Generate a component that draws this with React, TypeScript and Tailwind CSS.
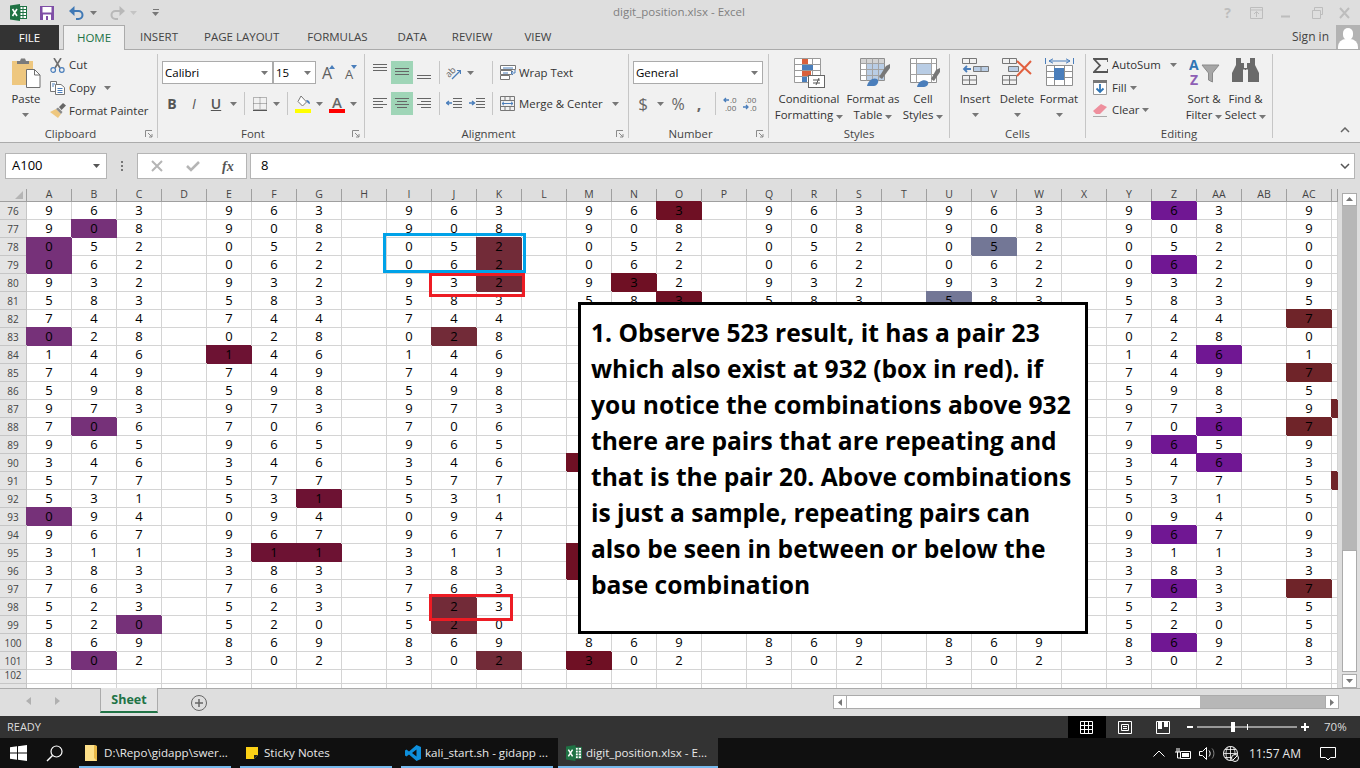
import type { ReactNode } from "react";

// Sheet data
const digits = [
  "963", "908", "052", "062", "932", "583", "744", "028", "146", "749", "598", "973", "706",
  "965", "346", "577", "531", "094", "967", "311", "383", "763", "523", "520", "869", "302",
];
const columns = [
  "A", "B", "C", "D", "E", "F", "G", "H", "I", "J", "K", "L", "M", "N", "O",
  "P", "Q", "R", "S", "T", "U", "V", "W", "X", "Y", "Z", "AA", "AB", "AC", "",
];

const fillClass: Record<string, string> = {
  plum: "bg-[#763179] border-[#763179] shadow-[-1px_-1px_0_0_#763179]",
  wine: "bg-[#6d1233] border-[#6d1233] shadow-[-1px_-1px_0_0_#6d1233]",
  rose: "bg-[#722b38] border-[#722b38] shadow-[-1px_-1px_0_0_#722b38]",
  berry: "bg-[#6f1024] border-[#6f1024] shadow-[-1px_-1px_0_0_#6f1024]",
  slate: "bg-[#737796] border-[#737796] shadow-[-1px_-1px_0_0_#737796]",
  violet: "bg-[#701793] border-[#701793] shadow-[-1px_-1px_0_0_#701793]",
  brick: "bg-[#6f2429] border-[#6f2429] shadow-[-1px_-1px_0_0_#6f2429]",
};

const fills: Record<string, string> = {
  A78: "plum", A79: "plum", A83: "plum", A93: "plum", B77: "plum", B88: "plum", B101: "plum", C99: "plum",
  E84: "wine", F95: "wine", G92: "wine", G95: "wine",
  J83: "rose", J98: "rose", J99: "rose", K78: "rose", K79: "rose", K80: "rose", K101: "rose",
  M90: "berry", M95: "berry", M96: "berry", M101: "berry", N80: "berry", O76: "berry", O81: "berry",
  U81: "slate", V78: "slate",
  Z76: "violet", Z79: "violet", Z89: "violet", Z94: "violet", Z97: "violet", Z100: "violet",
  AA84: "violet", AA88: "violet", AA90: "violet",
  AC82: "brick", AC85: "brick", AC88: "brick", AC97: "brick", AD87: "brick", AD91: "brick",
};

const noteLines = [
  "1. Observe 523 result, it has a pair 23",
  "which also exist at 932 (box in red). if",
  "you notice the combinations above 932",
  "there are pairs that are repeating and",
  "that is the pair 20. Above combinations",
  "is just a sample, repeating pairs can",
  "also be seen in between or below the",
  "base combination",
];

// Small ribbon helpers
const Caret = ({ color = "#777777" }: { color?: string }) => (
  <svg width="7" height="4" viewBox="0 0 7 4" className="inline-block">
    <path d="M0 0h7L3.5 4z" fill={color} />
  </svg>
);

const Launcher = () => (
  <svg width="8" height="8" viewBox="0 0 8 8">
    <path d="M0.5 7V0.5H7M3 3l4 4M7 4v3H4" fill="none" stroke="#8a8a8a" strokeWidth="1" />
  </svg>
);

const VSep = () => <div className="w-px h-[23px] bg-[#c6c6c6]" />;

const Group = ({
  label,
  launcher,
  className,
  children,
}: {
  label: string;
  launcher?: boolean;
  className: string;
  children: ReactNode;
}) => (
  <div className={`flex flex-col h-[84px] border-r border-[#c6c6c6] ${className}`}>
    <div className="h-[72px]">{children}</div>
    <div className="flex h-[12px] leading-[16px] text-[11.4px] text-[#444444]">
      <div className="flex-1 text-center">{label}</div>
      {launcher && (
        <div className="w-[16px] flex justify-center items-start pt-[4px]">
          <Launcher />
        </div>
      )}
    </div>
  </div>
);

const BigButton = ({
  className,
  icon,
  lines,
  caret,
}: {
  className: string;
  icon: ReactNode;
  lines: string[];
  caret?: "inline" | "below";
}) => (
  <div className={`flex flex-col items-center pt-[4px] ${className}`}>
    <div className="h-[30px] flex items-start justify-center">{icon}</div>
    <div className="mt-[3px] text-[11.4px] leading-[16px] text-[#333333] text-center whitespace-nowrap">
      {lines.map((line, i) => (
        <div key={line}>
          {line}
          {caret === "inline" && i === lines.length - 1 && (
            <span className="inline-block ml-[3px] align-middle">
              <Caret />
            </span>
          )}
        </div>
      ))}
      {caret === "below" && (
        <div className="h-[16px] flex items-center justify-center">
          <Caret />
        </div>
      )}
    </div>
  </div>
);

const SmallRow = ({ icon, label, caret, className }: { icon: ReactNode; label: string; caret: ReactNode; className: string }) => (
  <div className={`flex items-center text-[11.4px] text-[#333333] whitespace-nowrap ${className}`}>
    <div className="w-[19px] flex items-center">{icon}</div>
    <span>{label}</span>
    {caret}
  </div>
);

const InputBox = ({ className, text, caretClass }: { className: string; text: string; caretClass: string }) => (
  <div className={`h-[23px] bg-white border border-[#ababab] flex items-center justify-between text-[11.5px] text-black ${className}`}>
    <span className="pl-[2px]">{text}</span>
    <span className={`flex ${caretClass}`}>
      <Caret />
    </span>
  </div>
);

// Icons
const ExcelLogo = ({ size = 17 }: { size?: number }) => (
  <svg width={size} height={size} viewBox="0 0 17 17">
    <rect x="5" y="2.5" width="11.5" height="12" fill="#fff" stroke="#1f7244" />
    <path d="M10 2.5v12M13 2.5v12M7 5.5h9M7 8.5h9M7 11.5h9" stroke="#1f7244" strokeWidth="1" />
    <path d="M0 1.5 10 0v17L0 15.5z" fill="#1f7244" />
    <path d="M2.5 5 7 12M7 5 2.5 12" stroke="#fff" strokeWidth="1.6" />
  </svg>
);

const SaveIcon = () => (
  <svg width="14" height="14" viewBox="0 0 14 14">
    <path d="M0 0h14v14H0z" fill="#7f4fa6" />
    <rect x="2.5" y="1" width="9" height="5.5" fill="#fff" />
    <rect x="3" y="8.5" width="8" height="5.5" fill="#fff" />
    <rect x="6" y="10" width="2" height="4" fill="#7f4fa6" />
  </svg>
);

const TurnArrow = ({ color, flip }: { color: string; flip?: boolean }) => (
  <svg width="15" height="14" viewBox="0 0 15 14" className={flip ? "-scale-x-100" : ""}>
    <path d="M4 5h5.5a4 4 0 0 1 0 8H7" fill="none" stroke={color} strokeWidth="2" />
    <path d="M0 5 5.5 0v10z" fill={color} />
  </svg>
);

const PasteIcon = () => (
  <svg width="30" height="30" viewBox="0 0 30 30">
    <rect x="1" y="3" width="21" height="24" fill="#eec77f" />
    <path d="M6 3h3l1-2.500h4l1 2.500h3v3H6z" fill="#7b7b7b" />
    <path d="M15.500 11.500h8l5.500 5.500v12.500H15.500z" fill="#fff" stroke="#6f6f6f" />
    <path d="M23.500 11.500v5.500H29" fill="none" stroke="#6f6f6f" />
  </svg>
);

const CutIcon = () => (
  <svg width="15" height="15" viewBox="0 0 15 15">
    <path d="M4 0l6 10M11 0 5 10" stroke="#6f6f6f" strokeWidth="1.600" />
    <circle cx="3.200" cy="12" r="2.300" fill="none" stroke="#4a7ebb" strokeWidth="1.200" />
    <circle cx="11.800" cy="12" r="2.300" fill="none" stroke="#4a7ebb" strokeWidth="1.200" />
  </svg>
);

const CopyIcon = () => (
  <svg width="15" height="14" viewBox="0 0 15 14">
    <path d="M.5.500h6v10h-6z" fill="#fff" stroke="#777" />
    <path d="M5.500 3.500h5.500l3.500 3v7h-9z" fill="#fff" stroke="#777" />
    <path d="M7.500 7.500h5M7.500 9.500h5M7.500 11.500h5M2 3h3M2 5h2" stroke="#4a7ebb" />
  </svg>
);

const PainterIcon = () => (
  <svg width="16" height="15" viewBox="0 0 16 15">
    <path d="M0 9l6-3 5 5-3 4z" fill="#eec77f" />
    <path d="M6 6l5 5 1.500-2L8 4.500z" fill="#8a8a8a" />
    <path d="M9 4l4-4 3 2.500-4.500 4.500z" fill="#666" />
  </svg>
);

const GrowA = ({ size, up }: { size: number; up: boolean }) => (
  <span className="relative inline-flex w-[16px] h-[16px] items-end justify-center">
    <span className="text-[#5f5f5f] font-medium leading-none" style={{ fontSize: size }}>
      A
    </span>
    <svg width="6" height="4" viewBox="0 0 6 4" className="absolute right-0 top-0">
      <path d={up ? "M0 4h6L3 0z" : "M0 0h6L3 4z"} fill="#4a7ebb" />
    </svg>
  </span>
);

const BorderIcon = () => (
  <svg width="14" height="14" viewBox="0 0 14 14">
    <path d="M.5.500h13v12h-13zM7 .5v12M.5 6.500h13" fill="none" stroke="#777" strokeDasharray="1 1" />
    <path d="M0 13.500h14" stroke="#555" />
  </svg>
);

const FillIcon = () => (
  <svg width="16" height="18" viewBox="0 0 16 18">
    <path d="M6 1l5.500 6-4 4L3 6.500z" fill="#fff" stroke="#777" />
    <path d="M11 5c3 0 4 2 4 4-1 0-2-1-3-2z" fill="#4a7ebb" />
    <rect x="0" y="14" width="16" height="4" fill="#ffff00" />
  </svg>
);

const ColorAIcon = () => (
  <span className="flex flex-col items-center w-[16px] h-[18px]">
    <span className="text-[15px] leading-[14px] font-semibold text-[#666666]">A</span>
    <span className="w-[16px] h-[4px] bg-[#ff0000]" />
  </span>
);

const AlignV = ({ at }: { at: "top" | "mid" | "bot" }) => {
  const base = at === "top" ? 3 : at === "mid" ? 7 : 11;
  return (
    <svg width="14" height="23" viewBox="0 0 14 23">
      {[0, 3, 6].slice(at === "bot" ? 1 : 0).map((d) => (
        <path key={d} d={`M0 ${base + d + 0.5}h14`} stroke="#666" />
      ))}
    </svg>
  );
};

const AlignH = ({ at }: { at: "left" | "center" | "right" }) => {
  const wide = "M0 ";
  const shorts = at === "left" ? 0 : at === "center" ? 2 : 4;
  return (
    <svg width="14" height="12" viewBox="0 0 14 12">
      {[0.5, 3.5, 6.5, 9.5].map((y, i) => (
        <path key={y} d={i % 2 === 0 ? `${wide}${y}h14` : `M${shorts} ${y}h10`} stroke="#666" />
      ))}
    </svg>
  );
};

const OrientIcon = () => (
  <svg width="15" height="15" viewBox="0 0 15 15">
    <text x="0" y="10" fontSize="9" fontFamily="Open Sans" fill="#666" transform="rotate(-45 5 8)">
      ab
    </text>
    <path d="M6 14 14 6" stroke="#4a7ebb" strokeWidth="1.200" />
    <path d="M11 5.500h3.500V9" fill="none" stroke="#4a7ebb" strokeWidth="1.200" />
  </svg>
);

const IndentIcon = ({ dir }: { dir: "dec" | "inc" }) => (
  <svg width="16" height="12" viewBox="0 0 16 12">
    <path d="M7 .5h9M7 3.500h9M7 6.500h9M7 9.500h9" stroke="#666" />
    <path d={dir === "inc" ? "M0 5h5M3 3l2.500 2L3 7" : "M6 5H1M3 3 .5 5 3 7"} fill="none" stroke="#4a7ebb" strokeWidth="1.400" />
  </svg>
);

const WrapIcon = () => (
  <svg width="16" height="15" viewBox="0 0 16 15">
    <path d="M.5.500h15v4H.5zM.5 5.500h11v4H.5zM.5 10.500h9v4H.5z" fill="#fff" stroke="#777" />
    <path d="M3 3h10M3 8h5" stroke="#4a7ebb" />
    <path d="M15 5v3h-4M13 6l-2 2 2 2" fill="none" stroke="#4a7ebb" />
  </svg>
);

const MergeIcon = () => (
  <svg width="15" height="15" viewBox="0 0 15 15">
    <path d="M.5.500h14v14H.5zM.5 4.500h14M.5 10.500h14M5 .5v4M10 .5v4M5 10.500v4M10 10.500v4" fill="none" stroke="#777" />
    <path d="M2 7.500h11M4 5.800 2 7.500l2 1.700M11 5.800l2 1.700-2 1.700" fill="none" stroke="#4a7ebb" />
  </svg>
);

const DecimalIcon = ({ more }: { more: boolean }) => (
  <svg width="18" height="15" viewBox="0 0 18 15" className="text-[#666666]">
    <text x={more ? 7 : 2} y="6.500" fontSize="8" fontFamily="Open Sans" fill="currentColor">
      {more ? ".0" : ".00"}
    </text>
    <text x={more ? 2 : 7} y="14.500" fontSize="8" fontFamily="Open Sans" fill="currentColor">
      {more ? ".00" : ".0"}
    </text>
    <path d={more ? "M1 4h5M3 2 1 4l2 2" : "M0 11h5M3 9l2 2-2 2"} fill="none" stroke="#4a7ebb" strokeWidth="1.300" />
  </svg>
);

const CondFormatIcon = () => (
  <svg width="31" height="30" viewBox="0 0 31 30">
    <path d="M.5.500h26v24H.5zM8.500.5v24M18.500.5v24M.5 6.500h26M.5 12.500h26M.5 18.500h26" fill="#fff" stroke="#9a9a9a" />
    <rect x="8" y="1" width="6" height="5" fill="#d9603b" />
    <rect x="8" y="7" width="11" height="5" fill="#4a7ebb" />
    <rect x="8" y="13" width="9" height="5" fill="#d9603b" />
    <rect x="8" y="19" width="5" height="5" fill="#4a7ebb" />
    <rect x="14.500" y="17.500" width="16" height="12" fill="#fff" stroke="#666" />
    <path d="M19 22h7M19 25h7M25 20l-3 7" stroke="#555" fill="none" />
  </svg>
);

const TableBrushIcon = () => (
  <svg width="30" height="30" viewBox="0 0 30 30" className="ml-[4px]">
    <path d="M.5.500h24v22H.5z" fill="#fff" stroke="#8f8f8f" />
    <rect x="1" y="1" width="23" height="4.500" fill="#d3d3d3" />
    <rect x="6" y="6" width="18" height="16" fill="#b9cde5" />
    <path d="M6.500.5v22M12.500.5v22M18.500.5v22M.5 5.500h24M.5 11.500h24M.5 17.500h24" stroke="#a3a3a3" />
    <path d="M19 19l7-11 4-2v4l-8 11z" fill="#777" />
    <path d="M7 28c1-5 6-9 10-7 3 2 0 7-3 7z" fill="#4a7ebb" />
  </svg>
);

const CellStyleIcon = () => (
  <svg width="30" height="30" viewBox="0 0 30 30" className="ml-[3px]">
    <path d="M.5.500h26v24H.5z" fill="#fff" stroke="#8f8f8f" />
    <rect x="6" y="6" width="15" height="10" fill="#b9cde5" />
    <path d="M6.500.5v24M21.500.5v24M.5 5.500h26M.5 16.500h26" stroke="#a3a3a3" />
    <path d="M21 21l5-9 4-2v4l-6 9z" fill="#777" />
    <path d="M7 29c1-5 6-8 10-6 3 2 0 6-3 6z" fill="#4a7ebb" />
  </svg>
);

const InsertIcon = () => (
  <svg width="27" height="28" viewBox="0 0 27 28">
    <path d="M.5.500h14v5H.5zM7.500.5v5M.5 17.500h14v9H.5zM7.500 17.500v9M.5 22h14" fill="none" stroke="#777" />
    <path d="M11.500 8.500h15v5h-15z" fill="#b9cde5" stroke="#777" />
    <path d="M19 8.500v5" stroke="#777" />
    <path d="M9 11H2M5 8 2 11l3 3" fill="none" stroke="#4a7ebb" strokeWidth="1.800" />
  </svg>
);

const DeleteIcon = () => (
  <svg width="31" height="28" viewBox="0 0 31 28">
    <path d="M.5.500h14v5H.5zM7.500.5v5M.5 17.500h14v9H.5zM7.500 17.500v9M.5 22h14" fill="none" stroke="#777" />
    <path d="M6.500 8.500h10v5h-10z" fill="#b9cde5" stroke="#777" />
    <path d="M15 3l14 13M29 3 15 18" stroke="#e2603f" strokeWidth="2" />
  </svg>
);

const FormatIcon = () => (
  <svg width="29" height="30" viewBox="0 0 29 30">
    <path d="M4 3h21M8 .8 4 3l4 2.200M21 .8 25 3l-4 2.200M.5 0v6M28.500 0v6" fill="none" stroke="#4a7ebb" />
    <path d="M1.500 7.500h26v20h-26zM9.500 7.500v20M19.500 7.500v20M1.500 13.500h26M1.500 19.500h26" fill="#fff" stroke="#8f8f8f" />
    <rect x="9" y="10" width="10" height="12" fill="#4a7ebb" />
  </svg>
);

const SigmaIcon = () => (
  <svg width="15" height="15" viewBox="0 0 15 15">
    <path d="M15 4V1H1l6 6.500L1 14h14v-3" fill="none" stroke="#555" strokeWidth="1.800" />
  </svg>
);

const FillDownIcon = () => (
  <svg width="14" height="15" viewBox="0 0 14 15">
    <path d="M.5.500h13v14H.5z" fill="#fff" stroke="#999" />
    <rect x="0" y="0" width="14" height="3" fill="#777" />
    <path d="M7 4v8M3.500 8.500 7 12l3.500-3.500" fill="none" stroke="#2f75b5" strokeWidth="1.800" />
  </svg>
);

const EraserIcon = () => (
  <svg width="15" height="14" viewBox="0 0 15 14">
    <path d="M0 8l8-7 6 3-7 7H3z" fill="#ee8f9d" />
    <path d="M0 13.500h14" stroke="#aaa" />
  </svg>
);

const SortIcon = () => (
  <svg width="31" height="28" viewBox="0 0 31 28">
    <text x="0" y="12" fontSize="14" fontWeight="700" fontFamily="Open Sans" fill="#2f75b5">
      A
    </text>
    <text x="1" y="27" fontSize="14" fontWeight="700" fontFamily="Open Sans" fill="#8e5fb5">
      Z
    </text>
    <path d="M13 7h17l-6.500 8v9l-4-2v-7z" fill="#a6a6a6" stroke="#8a8a8a" />
  </svg>
);

const BinocularsIcon = () => (
  <svg width="27" height="24" viewBox="0 0 27 24">
    <path d="M4 0h5v5h3v5h3V5h3V0h5v7l4 8v9H16V12h-5v12H0v-9l4-8z" fill="#6a6a6a" />
    <path d="M12 11v12M15 11v12" stroke="#f1f1f1" />
  </svg>
);

const WinLogo = () => (
  <svg width="17" height="16" viewBox="0 0 17 16">
    <path d="M0 2.300 7 1.300v6.200H0zM8 1.200 17 0v7.500H8zM0 8.500h7v6.200l-7-1zM8 8.500h9V16l-9-1.200z" fill="#fff" />
  </svg>
);

const SearchIcon = () => (
  <svg width="17" height="17" viewBox="0 0 17 17">
    <circle cx="10.500" cy="6.500" r="5.500" fill="none" stroke="#fff" strokeWidth="1.200" />
    <path d="M6.500 10.500 1 16" stroke="#fff" strokeWidth="1.400" />
  </svg>
);

const FolderIcon = () => (
  <svg width="13" height="16" viewBox="0 0 13 16">
    <path d="M0 0h9l3 1v15H0z" fill="#fde08a" />
    <path d="M9 0v13l3 3V1z" fill="#e9b949" />
  </svg>
);

const StickyIcon = () => (
  <svg width="12" height="12" viewBox="0 0 12 12">
    <path d="M0 0h12v8l-4 4H0z" fill="#fcd116" />
    <path d="M12 8H8v4z" fill="#222" />
  </svg>
);

const VsCodeIcon = () => (
  <svg width="16" height="16" viewBox="0 0 16 16">
    <path d="M11.500 0 16 2v12l-4.500 2L4 9.500 1.500 11.500 0 10.500V5.500L1.500 4.500 4 6.500zM11.500 4.500 7 8l4.500 3.500z" fill="#0e8fdc" />
  </svg>
);

const App = () => {
  const tabs = [
    { name: "INSERT", cls: "ml-[15px]" },
    { name: "PAGE LAYOUT", cls: "ml-[26px]" },
    { name: "FORMULAS", cls: "ml-[28px]" },
    { name: "DATA", cls: "ml-[30px]" },
    { name: "REVIEW", cls: "ml-[25px]" },
    { name: "VIEW", cls: "ml-[32px]" },
  ];

  return (
    <div className="w-[1360px] h-[768px] overflow-hidden flex flex-col bg-[#dedede] font-['Open_Sans',sans-serif] text-[12px]">
      {/* Title bar */}
      <div className="h-[25px] flex items-center relative">
        <div className="ml-[10px]">
          <ExcelLogo />
        </div>
        <div className="ml-[13px]">
          <SaveIcon />
        </div>
        <div className="ml-[15px]">
          <TurnArrow color="#3f78b5" />
        </div>
        <div className="ml-[6px] flex">
          <Caret />
        </div>
        <div className="ml-[13px]">
          <TurnArrow color="#b8b8b8" flip />
        </div>
        <div className="ml-[5px] flex">
          <Caret color="#c4c4c4" />
        </div>
        <div className="ml-[15px] flex flex-col gap-[2px] items-center">
          <div className="w-[6px] h-px bg-[#777777]" />
          <Caret />
        </div>
        <div className="flex-1 text-center text-[11.5px] text-[#808080] pr-[14px] pb-[1px]">digit_position.xlsx - Excel</div>
        <div className="flex items-center text-[#bdbdbd]">
          <span className="w-[29px] text-center font-bold text-[14px]">?</span>
          <svg width="29" height="12" viewBox="0 0 29 12">
            <path d="M8.500 .5h12v11h-12zM8.500 3h12M14.500 10V5M12 7l2.500-2.500L17 7" fill="none" stroke="#bdbdbd" />
          </svg>
          <svg width="30" height="12" viewBox="0 0 30 12">
            <path d="M10 9.500h9" stroke="#bdbdbd" strokeWidth="2" />
          </svg>
          <svg width="30" height="12" viewBox="0 0 30 12">
            <path d="M11.500 3.500h8v8h-8zM13.500 3V.5h8v7h-2" fill="none" stroke="#bdbdbd" />
          </svg>
          <svg width="30" height="12" viewBox="0 0 30 12" className="mr-[-1px]">
            <path d="M9 1l9 10M18 1 9 11" stroke="#bdbdbd" strokeWidth="2" />
          </svg>
        </div>
      </div>

      {/* Tabs */}
      <div className="h-[25px] flex items-start border-b border-[#ababab] text-[11.5px] text-[#444444]">
        <div className="w-[59px] h-[25px] bg-[#333333] text-white flex items-center justify-center">FILE</div>
        <div className="ml-[4px] w-[62px] h-[25px] bg-[#f1f1f1] border-x border-t border-[#ababab] text-[#217346] flex items-center justify-center relative">
          HOME
        </div>
        {tabs.map((tab) => (
          <div key={tab.name} className={`h-[24px] flex items-center ${tab.cls}`}>
            {tab.name}
          </div>
        ))}
        <div className="ml-auto h-[24px] flex items-center text-[12px]">
          <span className="mr-[7px]">Sign in</span>
          <div className="w-[24px] h-[24px] bg-[#b3b3b3] overflow-hidden flex flex-col items-center">
            <div className="w-[10px] h-[12px] mt-[3px] rounded-full bg-white" />
            <div className="w-[20px] h-[10px] -mt-[1px] rounded-t-[8px] bg-white" />
          </div>
        </div>
      </div>

      {/* Ribbon */}
      <div className="h-[93px] bg-[#f1f1f1] border-b border-[#ababab] pt-[4px] flex">
        <Group label="Clipboard" launcher className="w-[158px]">
          <div className="flex">
            <div className="w-[50px] pl-[2px]">
              <BigButton className="w-[48px]" icon={<PasteIcon />} lines={["Paste"]} caret="below" />
            </div>
            <div className="flex flex-col">
              <SmallRow className="h-[22px]" icon={<CutIcon />} label="Cut" caret={null} />
              <SmallRow
                className="h-[23px]"
                icon={<CopyIcon />}
                label="Copy"
                caret={
                  <span className="ml-[8px] flex">
                    <Caret />
                  </span>
                }
              />
              <SmallRow className="h-[22px] pt-[1px]" icon={<PainterIcon />} label="Format Painter" caret={null} />
            </div>
          </div>
        </Group>

        <Group label="Font" launcher className="w-[207px]">
          <div className="pt-[7px] pl-[4px]">
            <div className="flex items-center">
              <InputBox className="w-[111px]" text="Calibri" caretClass="pr-[4px]" />
              <InputBox className="w-[43px]" text="15" caretClass="pr-[4px]" />
              <div className="ml-[3px] flex gap-[6px]">
                <GrowA size={16} up />
                <GrowA size={13} up={false} />
              </div>
            </div>
            <div className="mt-[8px] flex items-center h-[23px] text-[14px] text-[#555555]">
              <div className="w-[20px] text-center font-bold">B</div>
              <div className="w-[24px] text-center italic">I</div>
              <div className="w-[20px] text-center font-semibold underline">U</div>
              <div className="w-[14px] flex justify-center">
                <Caret />
              </div>
              <div className="w-[9px] flex justify-center">
                <VSep />
              </div>
              <div className="w-[22px] flex justify-center">
                <BorderIcon />
              </div>
              <div className="w-[10px] flex justify-center">
                <Caret />
              </div>
              <div className="w-[12px] flex justify-center">
                <VSep />
              </div>
              <div className="w-[20px] flex justify-center">
                <FillIcon />
              </div>
              <div className="w-[12px] flex justify-center">
                <Caret />
              </div>
              <div className="w-[24px] flex justify-center">
                <ColorAIcon />
              </div>
              <div className="w-[8px] flex justify-center">
                <Caret />
              </div>
            </div>
          </div>
        </Group>

        <Group label="Alignment" launcher className="w-[264px]">
          <div className="pt-[7px] pl-[4px]">
            <div className="flex items-center h-[23px]">
              <div className="w-[22px] flex justify-center">
                <AlignV at="top" />
              </div>
              <div className="w-[22px] h-[23px] bg-[#9fd5b7] flex justify-center">
                <AlignV at="mid" />
              </div>
              <div className="w-[22px] flex justify-center">
                <AlignV at="bot" />
              </div>
              <div className="w-[8px] flex justify-center">
                <VSep />
              </div>
              <div className="w-[20px] flex justify-center">
                <OrientIcon />
              </div>
              <div className="w-[14px] flex justify-center">
                <Caret />
              </div>
              <div className="w-[11px]" />
              <div className="w-[8px] flex justify-center">
                <VSep />
              </div>
              <div className="pl-[4px] w-[23px]">
                <WrapIcon />
              </div>
              <span className="text-[11.4px] text-[#333333]">Wrap Text</span>
            </div>
            <div className="mt-[8px] flex items-center h-[23px]">
              <div className="w-[22px] flex justify-center">
                <AlignH at="left" />
              </div>
              <div className="w-[22px] h-[23px] bg-[#9fd5b7] flex justify-center items-center">
                <AlignH at="center" />
              </div>
              <div className="w-[22px] flex justify-center">
                <AlignH at="right" />
              </div>
              <div className="w-[8px] flex justify-center">
                <VSep />
              </div>
              <div className="w-[22px] flex justify-center">
                <IndentIcon dir="dec" />
              </div>
              <div className="w-[23px] flex justify-center">
                <IndentIcon dir="inc" />
              </div>
              <div className="w-[8px] flex justify-center">
                <VSep />
              </div>
              <div className="pl-[4px] w-[23px]">
                <MergeIcon />
              </div>
              <span className="text-[11.4px] text-[#333333]">Merge &amp; Center</span>
              <span className="ml-[9px] flex">
                <Caret />
              </span>
            </div>
          </div>
        </Group>

        <Group label="Number" launcher className="w-[140px]">
          <div className="pt-[7px] pl-[4px]">
            <InputBox className="w-[130px]" text="General" caretClass="pr-[4px]" />
            <div className="mt-[8px] -ml-[1px] flex items-center h-[23px] text-[#666666]">
              <div className="w-[22px] text-center text-[17px]">$</div>
              <div className="w-[12px] flex justify-center">
                <Caret />
              </div>
              <div className="w-[24px] text-center text-[16px]">%</div>
              <div className="w-[18px] text-center text-[16px] font-bold leading-none">,</div>
              <div className="w-[14px] flex justify-center">
                <VSep />
              </div>
              <div className="w-[20px] flex justify-center">
                <DecimalIcon more />
              </div>
              <div className="w-[20px] flex justify-center">
                <DecimalIcon more={false} />
              </div>
            </div>
          </div>
        </Group>

        <Group label="Styles" className="w-[181px]">
          <div className="flex pl-[6px]">
            <BigButton className="w-[68px]" icon={<CondFormatIcon />} lines={["Conditional", "Formatting"]} caret="inline" />
            <BigButton className="ml-[4px] w-[52px]" icon={<TableBrushIcon />} lines={["Format as", "Table"]} caret="inline" />
            <BigButton className="ml-[5px] w-[38px]" icon={<CellStyleIcon />} lines={["Cell", "Styles"]} caret="inline" />
          </div>
        </Group>

        <Group label="Cells" className="w-[136px]">
          <div className="flex pl-[10px]">
            <BigButton className="w-[30px]" icon={<InsertIcon />} lines={["Insert"]} caret="below" />
            <BigButton className="ml-[10px] w-[34px]" icon={<DeleteIcon />} lines={["Delete"]} caret="below" />
            <BigButton className="ml-[6px] w-[38px]" icon={<FormatIcon />} lines={["Format"]} caret="below" />
          </div>
        </Group>

        <Group label="Editing" className="w-[187px]">
          <div className="flex pl-[7px]">
            <div className="w-[93px] flex flex-col">
              <SmallRow
                className="h-[22px]"
                icon={<SigmaIcon />}
                label="AutoSum"
                caret={
                  <span className="ml-[9px] flex">
                    <Caret />
                  </span>
                }
              />
              <SmallRow
                className="h-[23px]"
                icon={<FillDownIcon />}
                label="Fill"
                caret={
                  <span className="ml-[3px] flex">
                    <Caret />
                  </span>
                }
              />
              <SmallRow
                className="h-[22px]"
                icon={<EraserIcon />}
                label="Clear"
                caret={
                  <span className="ml-[3px] flex">
                    <Caret />
                  </span>
                }
              />
            </div>
            <BigButton className="w-[36px]" icon={<SortIcon />} lines={["Sort &", "Filter"]} caret="inline" />
            <BigButton className="ml-[4px] w-[39px]" icon={<BinocularsIcon />} lines={["Find &", "Select"]} caret="inline" />
          </div>
        </Group>

        <div className="flex-1 flex justify-end items-end pr-[10px] pb-[9px]">
          <svg width="10" height="6" viewBox="0 0 10 6">
            <path d="M1 5l4-4 4 4" fill="none" stroke="#666" strokeWidth="1.500" />
          </svg>
        </div>
      </div>

      {/* Formula bar */}
      <div className="h-[46px] pt-[10px] pl-[5px] flex items-start">
        <div className="w-[102px] h-[26px] bg-white border border-[#b5b5b5] flex items-center justify-between pl-[6px] pr-[6px] text-[13px] text-black">
          A100
          <Caret color="#555555" />
        </div>
        <div className="w-[30px] h-[26px] flex flex-col items-center justify-center gap-[2px]">
          <div className="w-[2px] h-[2px] bg-[#777777]" />
          <div className="w-[2px] h-[2px] bg-[#777777]" />
          <div className="w-[2px] h-[2px] bg-[#777777]" />
        </div>
        <div className="w-[110px] h-[26px] bg-white border border-[#b5b5b5] flex items-center">
          <svg width="36" height="12" viewBox="0 0 36 12" className="ml-[1px]">
            <path d="M13 1l10 10M23 1 13 11" stroke="#b5b5b5" strokeWidth="2" />
          </svg>
          <svg width="36" height="12" viewBox="0 0 36 12">
            <path d="M12 6l4 4 8-8" fill="none" stroke="#b5b5b5" strokeWidth="2.500" />
          </svg>
          <span className="ml-[11px] font-['Liberation_Serif',serif] italic font-bold text-[14px] text-[#555555]">fx</span>
        </div>
        <div className="ml-[3px] w-[1105px] h-[26px] bg-white border border-[#b5b5b5] flex items-center justify-between pl-[10px] pr-[4px] text-[13px] text-black">
          8
          <svg width="10" height="6" viewBox="0 0 10 6">
            <path d="M1 1l4 4 4-4" fill="none" stroke="#555" strokeWidth="1.500" />
          </svg>
        </div>
      </div>

      {/* Sheet area */}
      <div className="h-[500px] flex border-b border-[#ababab]">
        <div className="w-[1338px] h-[499px] relative overflow-hidden bg-white">
          <div className="grid grid-cols-[27px_repeat(29,45px)_6px] grid-rows-[13px_repeat(26,18px)_14px_18px]">
            {/* Column headers */}
            <div className="bg-[#dedede] border-r border-b border-[#9f9f9f] flex items-end justify-end pr-[3px] pb-[2px]">
              <svg width="8" height="8" viewBox="0 0 8 8">
                <path d="M8 0v8H0z" fill="#b5b5b5" />
              </svg>
            </div>
            {columns.map((col, i) => (
              <div
                key={`head-${i}`}
                className="bg-[#dedede] border-r border-b border-[#9f9f9f] text-center text-[10.500px] leading-[11px] text-[#444444]"
              >
                {col}
              </div>
            ))}

            {/* Rows */}
            {[...digits, "", ""].map((row, r) => {
              const rowNo = 76 + r;
              return [
                <div
                  key={`row-${rowNo}`}
                  className="bg-[#e4e4e4] border-r border-b border-[#c6c6c6] flex items-end justify-center text-[10px] leading-[15px] text-[#444444]"
                >
                  {rowNo}
                </div>,
                ...columns.map((col, c) => {
                  const name = col || "AD";
                  const kind = fills[`${name}${rowNo}`];
                  const value = row && col && c % 4 !== 3 ? row[c % 4] : "";
                  return (
                    <div
                      key={`${name}${rowNo}`}
                      className={`border-r border-b text-center text-[13px] leading-[17px] text-black ${
                        kind ? fillClass[kind] : "border-[#d4d4d4]"
                      }`}
                    >
                      {value}
                    </div>
                  );
                }),
              ];
            })}
          </div>

          {/* Hand drawn marks over the sheet */}
          <div className="absolute left-[383px] top-[44px] w-[143px] h-[40px] border-[3px] border-[#00a2e8]" />
          <div className="absolute left-[429px] top-[84px] w-[96px] h-[24px] border-[3px] border-[#ed1c24]" />
          <div className="absolute left-[429px] top-[405px] w-[84px] h-[27px] border-[3px] border-[#ed1c24]" />
          <div className="absolute left-[578px] top-[113px] w-[510px] h-[332px] bg-white border-[3px] border-black pl-[10px] pt-[10px] font-['Open_Sans',sans-serif] font-bold text-[24.6px] leading-[36px] text-black whitespace-nowrap">
            {noteLines.map((line) => (
              <div key={line}>{line}</div>
            ))}
          </div>
        </div>

        {/* Vertical scrollbar */}
        <div className="flex-1 pl-[4px] pr-[3px] pt-[4px] flex flex-col">
          <div className="h-[13px] bg-white border border-[#ababab] flex items-center justify-center">
            <svg width="7" height="4" viewBox="0 0 7 4">
              <path d="M0 4h7L3.500 0z" fill="#777" />
            </svg>
          </div>
          <div className="h-[345px] bg-[#b7b7b7]" />
          <div className="h-[122px] bg-white border border-[#ababab]" />
          <div className="mt-[2px] h-[14px] bg-white border border-[#ababab] flex items-center justify-center">
            <Caret />
          </div>
        </div>
      </div>

      {/* Sheet tabs and horizontal scrollbar */}
      <div className="h-[27px] flex items-start">
        <div className="w-[100px] h-[23px] flex items-center pl-[26px] gap-[24px]">
          <svg width="5" height="8" viewBox="0 0 5 8">
            <path d="M5 0v8L0 4z" fill="#b0b0b0" />
          </svg>
          <svg width="5" height="8" viewBox="0 0 5 8">
            <path d="M0 0v8l5-4z" fill="#b0b0b0" />
          </svg>
        </div>
        <div className="w-[58px] h-[25px] -mt-px pt-[1px] bg-[#e4e4e4] border-x border-[#ababab] border-b-2 border-b-[#217346] flex items-center justify-center font-bold text-[12.500px] text-[#217346]">
          Sheet
        </div>
        <div className="ml-[33px] mt-[6px] w-[16px] h-[16px] rounded-full border-[1.500px] border-[#666666] flex items-center justify-center text-[#666666]">
          <svg width="8" height="8" viewBox="0 0 8 8">
            <path d="M4 0v8M0 4h8" stroke="#666" strokeWidth="1.500" />
          </svg>
        </div>
        <div className="ml-[626px] mt-[6px] w-[506px] h-[14px] flex border-y border-[#ababab]">
          <div className="w-[14px] bg-white border-x border-[#ababab] flex items-center justify-center">
            <svg width="4" height="7" viewBox="0 0 4 7">
              <path d="M4 0v7L0 3.500z" fill="#777" />
            </svg>
          </div>
          <div className="w-[353px] bg-white" />
          <div className="w-[125px] bg-[#b7b7b7]" />
          <div className="w-[14px] bg-white border-x border-[#ababab] flex items-center justify-center">
            <svg width="4" height="7" viewBox="0 0 4 7">
              <path d="M0 0v7l4-3.500z" fill="#777" />
            </svg>
          </div>
        </div>
      </div>

      {/* Status bar */}
      <div className="h-[22px] bg-[#333333] flex items-center text-[11px] text-[#dcdcdc]">
        <span className="pl-[7px]">READY</span>
        <div className="ml-auto flex items-center h-[22px]">
          <div className="w-[38px] h-[22px] bg-black flex items-center justify-center">
            <svg width="14" height="13" viewBox="0 0 14 13">
              <path d="M.5.500h12v12H.5zM4.500.5v12M8.500.5v12M.5 4.500h12M.5 8.500h12" fill="none" stroke="#fff" />
            </svg>
          </div>
          <div className="w-[38px] flex justify-center">
            <svg width="14" height="13" viewBox="0 0 14 13">
              <path d="M.5.500h13v12H.5zM3.500 3.500h7v6h-7zM5 5.500h4M5 7.500h4" fill="none" stroke="#fff" />
            </svg>
          </div>
          <div className="w-[38px] flex justify-center">
            <svg width="14" height="13" viewBox="0 0 14 13">
              <path d="M.5.500h13v12H.5z" fill="none" stroke="#fff" />
              <path d="M2 1h4v7H2zM8 1h4v5H8z" fill="#fff" />
            </svg>
          </div>
          <div className="w-[15px] flex justify-center">
            <div className="w-[6px] h-[2px] bg-white" />
          </div>
          <svg width="100" height="14" viewBox="0 0 100 14">
            <path d="M0 7h100" stroke="#fff" />
            <path d="M50.500 4v6" stroke="#fff" />
            <rect x="34" y="2" width="4" height="10" fill="#fff" />
          </svg>
          <div className="w-[16px] flex justify-center">
            <svg width="8" height="8" viewBox="0 0 8 8">
              <path d="M4 0v8M0 4h8" stroke="#fff" strokeWidth="2" />
            </svg>
          </div>
          <span className="w-[47px] pl-[11px] text-[11.500px]">70%</span>
        </div>
      </div>

      {/* Windows taskbar */}
      <div className="h-[30px] bg-[#101010] flex items-start text-[11.6px] text-[#e8e8e8]">
        <div className="w-[46px] h-[30px] flex items-center pl-[10px]">
          <WinLogo />
        </div>
        <div className="w-[33px] h-[30px] flex items-center">
          <SearchIcon />
        </div>
        <div className="w-[152px] h-[30px] pt-[2px] border-b-2 border-[#76b9ed] flex items-center pl-[6px] gap-[6px] whitespace-nowrap">
          <FolderIcon />
          {"D:\\Repo\\gidapp\\swer..."}
        </div>
        <div className="ml-[9px] w-[152px] h-[30px] pt-[2px] border-b-2 border-[#76b9ed] flex items-center pl-[6px] gap-[6px] whitespace-nowrap">
          <StickyIcon />
          Sticky Notes
        </div>
        <div className="ml-[9px] w-[152px] h-[30px] pt-[2px] border-b-2 border-[#76b9ed] flex items-center pl-[4px] gap-[4px] whitespace-nowrap">
          <VsCodeIcon />
          kali_start.sh - gidapp ...
        </div>
        <div className="ml-[5px] w-[160px] h-[30px] pt-[2px] bg-[#333333] border-b-2 border-[#76b9ed] flex items-center pl-[8px] gap-[4px] whitespace-nowrap">
          <ExcelLogo size={16} />
          digit_position.xlsx - E...
        </div>
        <div className="ml-auto h-[30px] pt-[1px] flex items-center pr-[24px]">
          <svg width="12" height="7" viewBox="0 0 12 7">
            <path d="M.5 6.500 6 1l5.500 5.500" fill="none" stroke="#fff" />
          </svg>
          <svg width="16" height="12" viewBox="0 0 16 12" className="ml-[10px]">
            <path d="M5.500 3.500h10v7h-10z" fill="none" stroke="#fff" />
            <rect x="7" y="5" width="7" height="4" fill="#fff" />
            <path d="M0 4h5M2 0v4M4 0v4M2.500 4v6h3" fill="none" stroke="#fff" />
          </svg>
          <svg width="16" height="13" viewBox="0 0 16 13" className="ml-[8px]">
            <path d="M.5 4.500h3l4-4v12l-4-4h-3z" fill="none" stroke="#fff" />
            <path d="M10 3.500c1.500 1.500 1.500 4.500 0 6" fill="none" stroke="#fff" />
            <path d="M13 1.500c2.500 2.500 2.500 7.500 0 10" fill="none" stroke="#888" />
          </svg>
          <svg width="16" height="16" viewBox="0 0 16 16" className="ml-[8px]">
            <circle cx="7.500" cy="7.500" r="7" fill="none" stroke="#fff" />
            <path d="M7.500 .5v14M.5 7.500h14M2 3.500h11M2 11.500h11M4.500 1.500c-2 4-2 8 0 12M10.500 1.500c2 4 2 8 0 12" fill="none" stroke="#fff" strokeWidth=".8" />
            <circle cx="12" cy="12" r="3.500" fill="#101010" stroke="#fff" />
            <path d="M10 14l4-4" stroke="#fff" />
          </svg>
          <span className="ml-[10px] text-[12px] text-[#e8e8e8]">11:57 AM</span>
          <svg width="16" height="14" viewBox="0 0 16 14" className="ml-[19px]">
            <path d="M.5.500h15v10h-5l-2.500 2.500L5.500 10.500h-5z" fill="none" stroke="#fff" />
          </svg>
        </div>
      </div>
    </div>
  );
};

export default App;
